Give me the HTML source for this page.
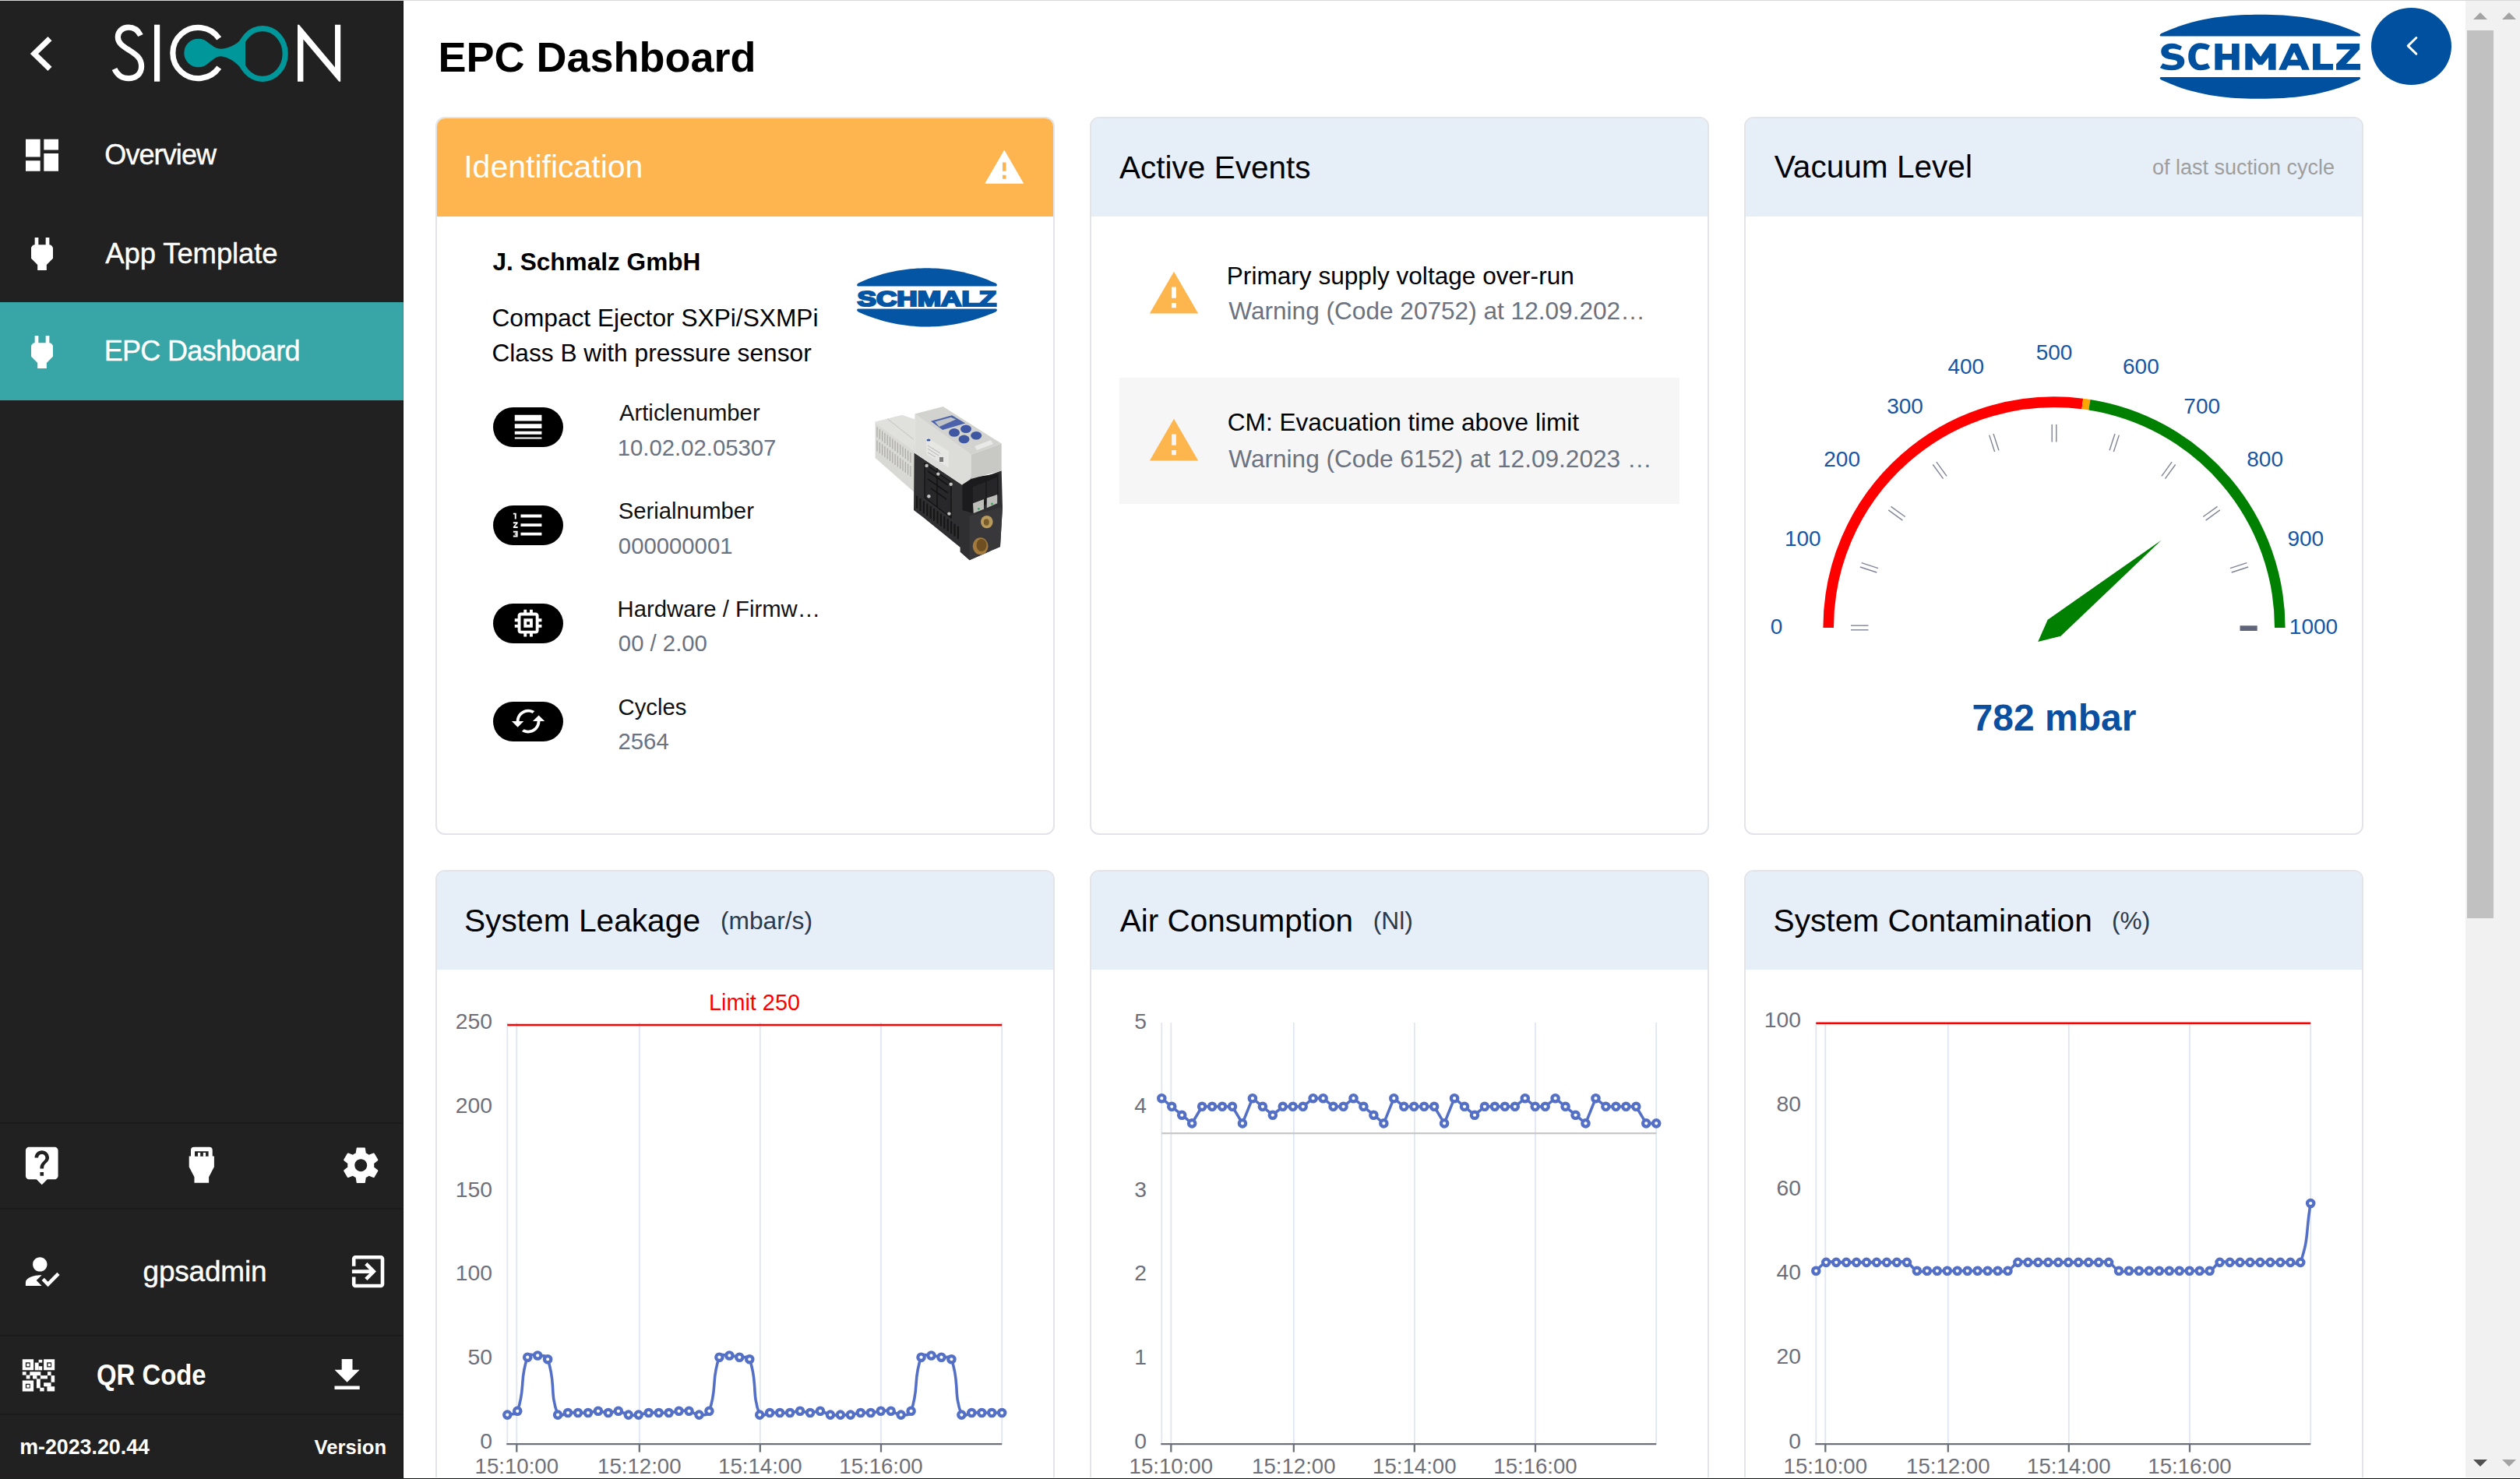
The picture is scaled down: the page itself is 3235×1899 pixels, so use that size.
<!DOCTYPE html><html><head><meta charset="utf-8"><title>EPC Dashboard</title><style>
html,body{margin:0;padding:0;}
body{width:3235px;height:1899px;position:relative;overflow:hidden;background:#fff;font-family:"Liberation Sans", sans-serif;}
.t{position:absolute;white-space:nowrap;line-height:1;font-family:"Liberation Sans", sans-serif;}
.a{position:absolute;}
svg{position:absolute;overflow:visible;}
</style></head><body>
<div class="a" style="left:0;top:0;width:3235px;height:1px;background:#d8d8d8"></div>
<div class="a" style="left:0;top:1px;width:517px;height:1898px;background:#212121"></div>
<div class="a" style="left:517px;top:1px;width:1px;height:1897px;background:#121212"></div>
<svg style="left:0;top:0;width:100px;height:100px"><path d="M64 49.7 L44 69 L64 88.3" fill="none" stroke="#fff" stroke-width="7.2" stroke-linecap="butt" stroke-linejoin="miter"/></svg>
<svg style="left:0;top:0;width:518px;height:140px">
<path d="M180.5 45.5 C177 38.5 171.5 35.2 165 35.2 C157 35.2 151.3 40.5 151.3 47.5 C151.3 55.5 158 59.5 166 64.5 C175 70.2 181.6 75 181.6 85 C181.6 95.5 174 100.6 165 100.6 C157 100.6 150.5 96 147 88.5" fill="none" stroke="#fff" stroke-width="7.2"/>
<rect x="198" y="31.7" width="7.2" height="73" fill="#fff"/>
<path d="M281.2 49.4 A32.6 32.6 0 1 0 281.2 86.6" fill="none" stroke="#fff" stroke-width="7.2"/>
<circle cx="254.6" cy="68" r="18.3" fill="#00979b"/>
<path d="M262 52.5 C270 55 275 62.7 283 62.7 C292 62.7 305.2 57 309.2 50 L315 52 L315 86 L309.2 88 C305.2 81 292 72.2 283 72.2 C275 72.2 270 81.5 262 83.5 Z" fill="#00979b"/>
<ellipse cx="337" cy="69" rx="29.2" ry="32.3" fill="none" stroke="#00979b" stroke-width="7.2"/>
<path d="M382 31.7 L384 31.7 L430 86.5 L430 31.7 L437.2 31.7 L437.2 104.8 L435.2 104.8 L389.4 50.5 L389.4 104.8 L382 104.8 Z" fill="#fff"/>
</svg>
<svg style="left:26.00px;top:171.70px;width:56.00px;height:54.70px;" viewBox="0 0 24 24" preserveAspectRatio="none"><path d="M3 13h8V3H3v10zm0 8h8v-6H3v6zm10 0h8V11h-8v10zm0-18v6h8V3h-8z" fill="#fff"/></svg>
<!--dash-->
<div class="t" style="left:134.29px;top:181.00px;font-size:36px;color:#fff;font-weight:400;letter-spacing:-0.9px;-webkit-text-stroke:0.4px #fff">Overview</div>
<svg style="left:26.00px;top:297.80px;width:56.00px;height:56.00px;" viewBox="0 0 24 24" preserveAspectRatio="none"><path d="M16.01 7L16 3h-2v4h-4V3H8v4h-.01C7 6.99 6 7.99 6 8.99v5.49L9.5 18v3h5v-3l3.5-3.51v-5.5c0-1-1-2-1.99-1.99z" fill="#fff"/></svg>
<div class="t" style="left:135.23px;top:308.00px;font-size:36.5px;color:#fff;font-weight:400;letter-spacing:-0.1px;-webkit-text-stroke:0.4px #fff">App Template</div>
<div class="a" style="left:0;top:388px;width:517px;height:126px;background:#38a5a6"></div><div class="a" style="left:517px;top:388px;width:1px;height:126px;background:#2b8e8e"></div>
<svg style="left:26.00px;top:423.90px;width:56.00px;height:56.00px;" viewBox="0 0 24 24" preserveAspectRatio="none"><path d="M16.01 7L16 3h-2v4h-4V3H8v4h-.01C7 6.99 6 7.99 6 8.99v5.49L9.5 18v3h5v-3l3.5-3.51v-5.5c0-1-1-2-1.99-1.99z" fill="#fff"/></svg>
<div class="t" style="left:133.75px;top:433.00px;font-size:36px;color:#fff;font-weight:400;letter-spacing:-0.7px;-webkit-text-stroke:0.4px #fff">EPC Dashboard</div>
<div class="a" style="left:0;top:1441px;width:517px;height:1.5px;background:#1b1b1b"></div>
<div class="a" style="left:0;top:1551px;width:517px;height:1.5px;background:#1b1b1b"></div>
<div class="a" style="left:0;top:1714px;width:517px;height:1.5px;background:#1b1b1b"></div>
<div class="a" style="left:0;top:1815px;width:517px;height:1.5px;background:#1b1b1b"></div>
<svg style="left:26.30px;top:1468.20px;width:55.50px;height:55.50px;" viewBox="0 0 24 24" preserveAspectRatio="none"><path d="M19 2H5c-1.11 0-2 .9-2 2v14c0 1.1.89 2 2 2h4l3 3 3-3h4c1.1 0 2-.9 2-2V4c0-1.1-.9-2-2-2zm-6 16h-2v-2h2v2zm2.07-7.75l-.9.92C13.45 11.9 13 12.5 13 14h-2v-.5c0-1.1.45-2.1 1.17-2.83l1.24-1.26c.37-.36.59-.86.59-1.41 0-1.1-.9-2-2-2s-2 .9-2 2H8c0-2.21 1.79-4 4-4s4 1.79 4 4c0 .88-.36 1.68-.93 2.25z" fill="#fff"/></svg>
<svg style="left:220px;top:1455px;width:80px;height:80px" viewBox="0 0 1479 1479">
<path fill="#fff" fill-rule="evenodd" d="M540 330 L900 330 Q975 330 975 405 L975 545 L1015 545 L1015 800 L890 1040 L890 1180 L545 1180 L545 1040 L420 800 L420 545 L462 545 L462 405 Q462 330 540 330 Z M555 428 L555 548 L880 548 L880 428 Z"/>
<rect x="628" y="462" width="60" height="90" fill="#fff"/><rect x="755" y="462" width="60" height="90" fill="#fff"/>
</svg>
<svg style="left:436.15px;top:1468.65px;width:54.50px;height:54.50px;" viewBox="0 0 24 24" preserveAspectRatio="none"><path d="M19.43 12.98c.04-.32.07-.64.07-.98s-.03-.66-.07-.98l2.11-1.65c.19-.15.24-.42.12-.64l-2-3.46c-.12-.22-.39-.3-.61-.22l-2.49 1c-.52-.4-1.08-.73-1.69-.98l-.38-2.65C14.46 2.18 14.25 2 14 2h-4c-.25 0-.46.18-.49.42l-.38 2.65c-.61.25-1.17.59-1.69.98l-2.49-1c-.23-.09-.49 0-.61.22l-2 3.46c-.13.22-.07.49.12.64l2.11 1.65c-.04.32-.07.65-.07.98s.03.66.07.98l-2.11 1.65c-.19.15-.24.42-.12.64l2 3.46c.12.22.39.3.61.22l2.49-1c.52.4 1.08.73 1.69.98l.38 2.65c.03.24.24.42.49.42h4c.25 0 .46-.18.49-.42l.38-2.65c.61-.25 1.17-.59 1.69-.98l2.49 1c.23.09.49 0 .61-.22l2-3.46c.12-.22.07-.49-.12-.64l-2.11-1.65zM12 15.5c-1.93 0-3.5-1.57-3.5-3.5s1.57-3.5 3.5-3.5 3.5 1.57 3.5 3.5-1.57 3.5-3.5 3.5z" fill="#fff"/></svg>
<!--gear-->
<svg style="left:26.10px;top:1605.40px;width:55.20px;height:55.20px;" viewBox="0 0 24 24" preserveAspectRatio="none"><path d="M9 17l3-2.94c-.39-.04-.68-.06-1-.06-2.67 0-8 1.34-8 4v2h9l-3-3zm2-5c2.21 0 4-1.79 4-4s-1.79-4-4-4-4 1.79-4 4 1.79 4 4 4m4.47 8.5L12 17l1.4-1.41 2.07 2.08 5.13-5.17 1.4 1.41z" fill="#fff"/></svg>
<div class="t" style="left:183.55px;top:1614.00px;font-size:37px;color:#fff;font-weight:400;letter-spacing:-0.2px;-webkit-text-stroke:0.4px #fff">gpsadmin</div>
<svg style="left:444.80px;top:1605.30px;width:55.20px;height:55.20px;" viewBox="0 0 24 24" preserveAspectRatio="none"><path d="M10.09 15.59L11.5 17l5-5-5-5-1.41 1.41L12.67 11H3v2h9.67l-2.58 2.59zM19 3H5c-1.11 0-2 .9-2 2v4h2V5h14v14H5v-4H3v4c0 1.1.89 2 2 2h14c1.1 0 2-.9 2-2V5c0-1.1-.9-2-2-2z" fill="#fff"/></svg>
<svg style="left:15px;top:1725px;width:80px;height:80px" viewBox="0 0 1479 1479"><g fill="#fff">
<path fill-rule="evenodd" d="M255 375H520V635H255Z M330 450V565H440V450Z"/><rect x="355" y="475" width="65" height="65"/>
<path fill-rule="evenodd" d="M760 375H1020V635H760Z M835 450V565H945V450Z"/><rect x="860" y="475" width="65" height="65"/>
<path fill-rule="evenodd" d="M255 880H520V1135H255Z M330 955V1065H440V955Z"/><rect x="355" y="980" width="65" height="65"/>
<rect x="640" y="385" width="85" height="70"/><rect x="550" y="455" width="90" height="180"/><rect x="640" y="540" width="85" height="95"/>
<rect x="255" y="670" width="90" height="80"/><rect x="345" y="750" width="90" height="90"/><rect x="430" y="670" width="260" height="90"/>
<rect x="500" y="760" width="100" height="80"/><rect x="680" y="760" width="170" height="80"/><rect x="850" y="670" width="85" height="90"/>
<rect x="935" y="760" width="85" height="160"/><rect x="590" y="840" width="90" height="220"/><rect x="670" y="1050" width="100" height="85"/>
<rect x="760" y="930" width="175" height="90"/><rect x="840" y="1020" width="180" height="115"/>
</g></svg>
<div class="t" style="left:124.00px;top:1748.00px;font-size:36.5px;color:#fff;font-weight:700;transform:scaleX(0.90);transform-origin:0 0">QR Code</div>
<svg style="left:417.50px;top:1738.40px;width:55.20px;height:55.20px;" viewBox="0 0 24 24" preserveAspectRatio="none"><path d="M19 9h-4V3H9v6H5l7 7 7-7zM5 18v2h14v-2H5z" fill="#fff"/></svg>
<div class="t" style="left:25.13px;top:1845.00px;font-size:26.8px;color:#fff;font-weight:700;">m-2023.20.44</div>
<div class="t" style="left:403.62px;top:1846.00px;font-size:25.6px;color:#fff;font-weight:700;">Version</div>
<div class="t" style="left:562.39px;top:46.00px;font-size:54px;color:#000;font-weight:700;">EPC Dashboard</div>
<svg style="left:2765px;top:10px;width:275px;height:125px" viewBox="0 0 2520 1145"><g fill="#0050a0">
<path d="M80 335 L2420 335 Q2445 322 2410 300 C2000 110 1600 80 1250 80 C900 80 500 110 90 300 Q55 322 80 335 Z"/>
<path d="M80 815 L2420 815 Q2445 828 2410 850 C2000 1040 1600 1070 1250 1070 C900 1070 500 1040 90 850 Q55 828 80 815 Z"/>
<path d="M330 455 C290 432 250 420 210 420 C130 420 85 460 85 515 C85 585 150 600 225 612 C262 618 275 628 275 645 C275 665 250 675 210 675 C165 675 130 665 105 652 L72 705 C110 725 160 735 210 735 C300 735 360 695 360 635 C360 565 300 548 225 536 C190 530 172 522 172 505 C172 487 190 480 218 480 C250 480 285 490 310 500 Z"/>
<path d="M660 445 C625 425 585 415 545 415 C460 415 405 480 405 575 C405 670 460 735 548 735 C590 735 630 725 662 705 L630 650 C605 663 578 670 550 670 C515 670 490 640 490 575 C490 510 515 480 550 480 C578 480 605 487 630 500 Z"/>
<path d="M718 422 L805 422 L805 540 L917 540 L917 422 L1005 422 L1005 730 L917 730 L917 612 L805 612 L805 730 L718 730 Z"/>
<path d="M1075 422 L1145 422 L1255 575 L1362 422 L1435 422 L1435 730 L1348 730 L1348 585 L1278 670 L1230 670 L1160 585 L1160 730 L1075 730 Z"/>
<path fill-rule="evenodd" d="M1613 422 L1697 422 L1832 730 L1745 730 L1722 680 L1580 680 L1555 730 L1467 730 Z M1650 520 L1695 612 L1605 612 Z"/>
<path d="M1870 422 L1958 422 L1958 660 L2108 660 L2108 730 L1870 730 Z"/>
<path d="M2150 422 L2420 422 L2420 490 L2262 660 L2428 660 L2428 730 L2145 730 L2145 662 L2310 490 L2150 490 Z"/>
</g></svg>
<div class="a" style="left:3044px;top:9.8px;width:103px;height:99.3px;border-radius:50%;background:#0050a0"></div>
<svg style="left:3085px;top:44px;width:22px;height:30px"><path d="M16.8 4.5 L6.2 14.8 L16.8 25.1" fill="none" stroke="#fff" stroke-width="3" stroke-linecap="round" stroke-linejoin="round"/></svg>
<div class="a" style="left:3165px;top:1px;width:70px;height:1896px;background:#f1f1f1"></div>
<div class="a" style="left:3167px;top:39px;width:34px;height:1140px;background:#c1c1c1"></div>
<svg style="left:3165px;top:0;width:70px;height:1899px"><g fill="#a3a3a3"><path d="M10 24.9 L28 24.9 L19 15.9 Z"/><path d="M47 24.9 L65 24.9 L56 15.9 Z"/><path d="M47 1874 L65 1874 L56 1883 Z"/></g><path d="M10 1874 L28 1874 L19 1883 Z" fill="#505050"/></svg>
<div class="a" style="left:559px;top:150px;width:795px;height:922px;box-sizing:border-box;border:2px solid #e2e4e9;border-radius:12px;background:#fff;overflow:hidden"><div class="a" style="left:0;top:0;right:0;height:126px;background:#feb54f"></div></div>
<div class="a" style="left:1399px;top:150px;width:795px;height:922px;box-sizing:border-box;border:2px solid #e2e4e9;border-radius:12px;background:#fff;overflow:hidden"><div class="a" style="left:0;top:0;right:0;height:126px;background:#e6eef7"></div></div>
<div class="a" style="left:2239px;top:150px;width:795px;height:922px;box-sizing:border-box;border:2px solid #e2e4e9;border-radius:12px;background:#fff;overflow:hidden"><div class="a" style="left:0;top:0;right:0;height:126px;background:#e6eef7"></div></div>
<div class="a" style="left:559px;top:1117px;width:795px;height:900px;box-sizing:border-box;border:2px solid #e2e4e9;border-radius:12px;background:#fff;overflow:hidden"><div class="a" style="left:0;top:0;right:0;height:126px;background:#e6eef7"></div></div>
<div class="a" style="left:1399px;top:1117px;width:795px;height:900px;box-sizing:border-box;border:2px solid #e2e4e9;border-radius:12px;background:#fff;overflow:hidden"><div class="a" style="left:0;top:0;right:0;height:126px;background:#e6eef7"></div></div>
<div class="a" style="left:2239px;top:1117px;width:795px;height:900px;box-sizing:border-box;border:2px solid #e2e4e9;border-radius:12px;background:#fff;overflow:hidden"><div class="a" style="left:0;top:0;right:0;height:126px;background:#e6eef7"></div></div>
<div class="t" style="left:595.22px;top:194.00px;font-size:41px;color:#fff;font-weight:400;">Identification</div>
<svg style="left:1261.70px;top:187.50px;width:54.50px;height:54.50px;" viewBox="0 0 24 24" preserveAspectRatio="none"><path d="M1 21h22L12 2 1 21z M13 18.4h-2v-2.2h2z M13 14h-2v-5h2z" fill="#fff"/></svg>
<div class="t" style="left:632.52px;top:321.00px;font-size:31.6px;color:#000;font-weight:700;">J. Schmalz GmbH</div>
<div class="t" style="left:631.39px;top:393.00px;font-size:31.7px;color:#000;font-weight:400;">Compact Ejector SXPi/SXMPi</div>
<div class="t" style="left:631.39px;top:438.00px;font-size:31.7px;color:#000;font-weight:400;">Class B with pressure sensor</div>
<svg style="left:1090px;top:335px;width:200px;height:95px" viewBox="0 0 2520 1197"><g fill="#0455a4">
<path d="M140 410 L2380 410 Q2410 390 2370 360 C1900 150 1500 118 1260 118 C1020 118 600 150 150 360 Q110 390 140 410 Z"/>
<path d="M140 775 L2380 775 Q2410 795 2370 825 C1900 1030 1500 1065 1260 1065 C1020 1065 600 1030 150 825 Q110 795 140 775 Z"/>
</g><text x="1258" y="725" text-anchor="middle" font-family="Liberation Sans" font-weight="700" font-size="340" textLength="2250" lengthAdjust="spacingAndGlyphs" fill="#0455a4" stroke="#0455a4" stroke-width="28">SCHMALZ</text></svg>
<div class="a" style="left:633px;top:523px;width:90px;height:51px;border-radius:25.5px;background:#000"></div>
<svg style="left:654.75px;top:525.30px;width:46.20px;height:46.20px;" viewBox="0 0 24 24" preserveAspectRatio="none"><path d="M3 17h18v-2H3v2zm0 3h18v-1H3v1zm0-7h18v-3H3v3zm0-9v4h18V4H3z" fill="#fff"/></svg>
<div class="t" style="left:794.94px;top:515.00px;font-size:29.3px;color:#111;font-weight:400;">Articlenumber</div>
<div class="t" style="left:792.77px;top:560.00px;font-size:29.3px;color:#6b7280;font-weight:400;">10.02.02.05307</div>
<div class="a" style="left:633px;top:649px;width:90px;height:51px;border-radius:25.5px;background:#000"></div>
<svg style="left:654.75px;top:651.30px;width:46.20px;height:46.20px;" viewBox="0 0 24 24" preserveAspectRatio="none"><path d="M2 17h2v.5H3v1h1v.5H2v1h3v-4H2v1zm1-9h1V4H2v1h1v3zm-1 3h1.8L2 13.1v.9h3v-1H3.2L5 10.9V10H2v1zm5-6v2h14V5H7zm0 14h14v-2H7v2zm0-6h14v-2H7v2z" fill="#fff"/></svg>
<div class="t" style="left:793.67px;top:641.00px;font-size:29.3px;color:#111;font-weight:400;">Serialnumber</div>
<div class="t" style="left:793.86px;top:686.00px;font-size:29.3px;color:#6b7280;font-weight:400;">000000001</div>
<div class="a" style="left:633px;top:775px;width:90px;height:51px;border-radius:25.5px;background:#000"></div>
<svg style="left:654.75px;top:777.30px;width:46.20px;height:46.20px;" viewBox="0 0 24 24" preserveAspectRatio="none"><path d="M15 9H9v6h6V9zm-2 4h-2v-2h2v2zm8-2V9h-2V7c0-1.1-.9-2-2-2h-2V3h-2v2h-2V3H9v2H7c-1.1 0-2 .9-2 2v2H3v2h2v2H3v2h2v2c0 1.1.9 2 2 2h2v2h2v-2h2v2h2v-2h2c1.1 0 2-.9 2-2v-2h2v-2h-2v-2h2zm-4 6H7V7h10v10z" fill="#fff"/></svg>
<div class="t" style="left:792.60px;top:767.00px;font-size:29.3px;color:#111;font-weight:400;">Hardware / Firmw…</div>
<div class="t" style="left:793.86px;top:811.00px;font-size:29.3px;color:#6b7280;font-weight:400;">00 / 2.00</div>
<div class="a" style="left:633px;top:901px;width:90px;height:51px;border-radius:25.5px;background:#000"></div>
<svg style="left:654.75px;top:903.30px;width:46.20px;height:46.20px;" viewBox="0 0 24 24" preserveAspectRatio="none"><path d="M19 8l-4 4h3c0 3.31-2.69 6-6 6-1.01 0-1.97-.25-2.8-.7l-1.46 1.46C8.97 19.54 10.43 20 12 20c4.42 0 8-3.58 8-8h3l-4-4zM6 12c0-3.31 2.69-6 6-6 1.01 0 1.97.25 2.8.7l1.46-1.46C15.03 4.46 13.57 4 12 4c-4.42 0-8 3.58-8 8H1l4 4 4-4H6z" fill="#fff"/></svg>
<div class="t" style="left:793.51px;top:893.00px;font-size:29.3px;color:#111;font-weight:400;">Cycles</div>
<div class="t" style="left:793.53px;top:937.00px;font-size:29.3px;color:#6b7280;font-weight:400;">2564</div>
<svg style="left:1115px;top:515px;width:180px;height:210px" viewBox="0 0 180 210">
<path d="M8.6 26.8 L42.9 17.9 L59.3 23.6 L59.3 116.5 L58 116.4 L8.6 73 Z" fill="#d8d8d5"/>
<path d="M8.6 26.8 L42.9 17.9 L59.3 23.6 L59.3 50 L57.9 64 L8.6 28.4 Z" fill="#e0e0dd"/>
<path d="M24.3 22.9 L57.9 49.3" stroke="#b9b9b5" stroke-width="0.8"/>
<g stroke="#a8a6a1" stroke-width="1.1"><line x1="11.0" y1="33.4" x2="11.0" y2="46.4"/><line x1="11.0" y1="50.4" x2="11.0" y2="64.4"/><line x1="14.3" y1="35.9" x2="14.3" y2="48.9"/><line x1="14.3" y1="52.9" x2="14.3" y2="66.9"/><line x1="17.6" y1="38.4" x2="17.6" y2="51.4"/><line x1="17.6" y1="55.4" x2="17.6" y2="69.4"/><line x1="20.9" y1="40.9" x2="20.9" y2="53.9"/><line x1="20.9" y1="57.9" x2="20.9" y2="71.9"/><line x1="24.2" y1="43.4" x2="24.2" y2="56.4"/><line x1="24.2" y1="60.4" x2="24.2" y2="74.4"/><line x1="27.5" y1="45.9" x2="27.5" y2="58.9"/><line x1="27.5" y1="62.9" x2="27.5" y2="76.9"/><line x1="30.8" y1="48.4" x2="30.8" y2="61.4"/><line x1="30.8" y1="65.4" x2="30.8" y2="79.4"/><line x1="34.1" y1="50.9" x2="34.1" y2="63.9"/><line x1="34.1" y1="67.9" x2="34.1" y2="81.9"/><line x1="37.4" y1="53.4" x2="37.4" y2="66.4"/><line x1="37.4" y1="70.4" x2="37.4" y2="84.4"/><line x1="40.7" y1="56.0" x2="40.7" y2="69.0"/><line x1="40.7" y1="73.0" x2="40.7" y2="87.0"/><line x1="44.0" y1="58.5" x2="44.0" y2="71.5"/><line x1="44.0" y1="75.5" x2="44.0" y2="89.5"/><line x1="47.3" y1="61.0" x2="47.3" y2="74.0"/><line x1="47.3" y1="78.0" x2="47.3" y2="92.0"/><line x1="50.6" y1="63.5" x2="50.6" y2="76.5"/><line x1="50.6" y1="80.5" x2="50.6" y2="94.5"/><line x1="53.9" y1="66.0" x2="53.9" y2="79.0"/><line x1="53.9" y1="83.0" x2="53.9" y2="97.0"/></g>
<path d="M58.6 66.4 L120 107.5 L170.7 89.3 L172 137 L169 187 L129.5 204.2 L117.6 193.8 L117.6 187.8 L69.2 148.4 L58 140 Z" fill="#2f2f31"/>
<path d="M129.5 147.6 L171.9 135.7 L168.9 187 L129.5 204.2 Z" fill="#38383a"/>
<g fill="#161617"><rect x="61.0" y="121.7" width="2.2" height="16"/><rect x="65.4" y="125.0" width="2.2" height="16"/><rect x="69.8" y="128.3" width="2.2" height="16"/><rect x="74.2" y="131.5" width="2.2" height="16"/><rect x="78.6" y="134.8" width="2.2" height="16"/><rect x="83.0" y="138.0" width="2.2" height="16"/><rect x="87.4" y="141.3" width="2.2" height="16"/><rect x="91.8" y="144.5" width="2.2" height="16"/><rect x="96.2" y="147.8" width="2.2" height="16"/><rect x="100.6" y="151.0" width="2.2" height="16"/><rect x="105.0" y="154.3" width="2.2" height="16"/><rect x="109.4" y="157.6" width="2.2" height="16"/><rect x="113.8" y="160.8" width="2.2" height="16"/></g>
<path d="M72 80 L106 104 L106 150 L72 124 Z" fill="#28282a" stroke="#121212" stroke-width="1.2"/>
<path d="M76 90 L102 108 M76 100 L102 118 M88 86 L88 136 M80 112 L100 126" stroke="#141414" stroke-width="1.6"/>
<g fill="#c4c5c2"><circle cx="74.6" cy="82.9" r="2.2"/><circle cx="89.3" cy="93.6" r="2.2"/><circle cx="105.7" cy="106.7" r="2.2"/><circle cx="77.4" cy="122.3" r="2.2"/><circle cx="103.4" cy="144.6" r="2.2"/></g>
<path d="M120.5 100 L166.7 93 L166.7 120.8 L134 143.9 L120.5 140 Z" fill="#1b1b1d"/>
<path d="M134 110 L150 104 L150 128 L134 134 Z M152 103 L165 98 L165 121 L152 126 Z" fill="#262628"/>
<path d="M134 131.2 L148 126 L148 138.7 L134.7 143.9 Z" fill="#bdbdb9"/><path d="M151.8 124.6 L165.2 120.1 L165.2 131.2 L151.8 137.2 Z" fill="#bdbdb9"/>
<circle cx="141.4" cy="138.3" r="1.4" fill="#3aa35a"/><circle cx="158.5" cy="132" r="1.4" fill="#3aa35a"/>
<path d="M59.3 16.4 L131.4 68.6 L131.4 100 L120 107.5 L59.3 66.4 Z" fill="#dcdcd9"/>
<path d="M131.4 68.6 L170.7 54.6 L170.7 89.3 L131.4 100 Z" fill="#c8c8c4"/>
<path d="M59.3 16.4 L95.7 7.1 L170.7 54.6 L131.4 68.6 Z" fill="#d2d2ce"/>
<path d="M80 25.7 L107.1 18.2 L124.3 28.6 L95 37.1 Z" fill="#4c62aa"/>
<path d="M85 26.4 L105.7 20.7 L112.1 23.6 L90.7 32.9 Z" fill="#bfc3c4"/>
<g fill="#3f56a3"><ellipse cx="110" cy="40.4" rx="7" ry="5.3"/><ellipse cx="125" cy="35.7" rx="7" ry="5.3"/><ellipse cx="122.5" cy="48.9" rx="7" ry="5.3"/><ellipse cx="138.2" cy="44.3" rx="7" ry="5.3"/></g>
<path d="M136 58 L157 50 L160 55 L139 63 Z" fill="#e9e9e7"/>
<path d="M74.3 46.4 L102.9 64.3 L102.9 85.7 L74.3 68.6 Z" fill="#e6e6e3"/>
<g stroke="#a0a0a0" stroke-width="0.7"><path d="M76 57 L92 67 M76 61 L90 70 M76 66 L86 72"/></g>
<rect x="91" y="72" width="5" height="6" fill="#7a7a7a"/>
<g fill="#3f56a3"><ellipse cx="77" cy="50" rx="2.5" ry="1.6"/></g>
<ellipse cx="151.8" cy="155.1" rx="7.8" ry="8.2" fill="#b89a5c"/><ellipse cx="151.3" cy="155.5" rx="3.5" ry="4.2" fill="#7a5c2a"/>
<ellipse cx="143.6" cy="186.3" rx="9.9" ry="11" fill="#a47b3c"/><ellipse cx="145" cy="185" rx="6.5" ry="8" fill="#6d4f22"/>
</svg>
<div class="t" style="left:1437.12px;top:195.00px;font-size:40.5px;color:#000;font-weight:400;">Active Events</div>
<div class="a" style="left:1437px;top:485px;width:719px;height:162px;background:#f6f6f6"></div>
<svg style="left:1472.70px;top:343.10px;width:68.00px;height:68.00px;" viewBox="0 0 24 24" preserveAspectRatio="none"><path d="M1 21h22L12 2 1 21z M13 18.4h-2v-2.2h2z M13 14h-2v-5h2z" fill="#fdb54e"/></svg>
<svg style="left:1472.70px;top:532.00px;width:68.00px;height:68.00px;" viewBox="0 0 24 24" preserveAspectRatio="none"><path d="M1 21h22L12 2 1 21z M13 18.4h-2v-2.2h2z M13 14h-2v-5h2z" fill="#fdb54e"/></svg>
<div class="t" style="left:1574.81px;top:339.00px;font-size:31.6px;color:#000;font-weight:400;">Primary supply voltage over-run</div>
<div class="t" style="left:1577.26px;top:384.00px;font-size:31.6px;color:#6b7280;font-weight:400;">Warning (Code 20752) at 12.09.202…</div>
<div class="t" style="left:1575.80px;top:527.00px;font-size:31.6px;color:#000;font-weight:400;">CM: Evacuation time above limit</div>
<div class="t" style="left:1577.26px;top:574.00px;font-size:31.6px;color:#6b7280;font-weight:400;">Warning (Code 6152) at 12.09.2023 …</div>
<div class="t" style="left:2277.82px;top:194.00px;font-size:40.6px;color:#000;font-weight:400;">Vacuum Level</div>
<div class="t" style="right:238.00px;top:202.00px;font-size:27px;color:#9e9e9e;font-weight:400;">of last suction cycle</div>
<svg style="left:0;top:0;width:3235px;height:1899px"><path d="M2347.20 806.00 A289.8 289.8 0 0 1 2673.32 518.49" fill="none" stroke="#ff0000" stroke-width="13.6"/><path d="M2673.32 518.49 A289.8 289.8 0 0 1 2682.33 519.77" fill="none" stroke="#ffa500" stroke-width="13.6"/><path d="M2682.33 519.77 A289.8 289.8 0 0 1 2926.80 806.00" fill="none" stroke="#008000" stroke-width="13.6"/><line x1="2398.50" y1="808.80" x2="2376.00" y2="808.80" stroke="#7f8496" stroke-width="1.4"/><line x1="2398.50" y1="803.20" x2="2376.00" y2="803.20" stroke="#7f8496" stroke-width="1.4"/><line x1="2409.31" y1="734.96" x2="2387.91" y2="728.01" stroke="#7f8496" stroke-width="1.4"/><line x1="2411.04" y1="729.64" x2="2389.64" y2="722.68" stroke="#7f8496" stroke-width="1.4"/><line x1="2442.40" y1="668.08" x2="2424.20" y2="654.85" stroke="#7f8496" stroke-width="1.4"/><line x1="2445.70" y1="663.55" x2="2427.49" y2="650.32" stroke="#7f8496" stroke-width="1.4"/><line x1="2494.55" y1="614.70" x2="2481.32" y2="596.49" stroke="#7f8496" stroke-width="1.4"/><line x1="2499.08" y1="611.40" x2="2485.85" y2="593.20" stroke="#7f8496" stroke-width="1.4"/><line x1="2560.64" y1="580.04" x2="2553.68" y2="558.64" stroke="#7f8496" stroke-width="1.4"/><line x1="2565.96" y1="578.31" x2="2559.01" y2="556.91" stroke="#7f8496" stroke-width="1.4"/><line x1="2634.20" y1="567.50" x2="2634.20" y2="545.00" stroke="#7f8496" stroke-width="1.4"/><line x1="2639.80" y1="567.50" x2="2639.80" y2="545.00" stroke="#7f8496" stroke-width="1.4"/><line x1="2708.04" y1="578.31" x2="2714.99" y2="556.91" stroke="#7f8496" stroke-width="1.4"/><line x1="2713.36" y1="580.04" x2="2720.32" y2="558.64" stroke="#7f8496" stroke-width="1.4"/><line x1="2774.92" y1="611.40" x2="2788.15" y2="593.20" stroke="#7f8496" stroke-width="1.4"/><line x1="2779.45" y1="614.70" x2="2792.68" y2="596.49" stroke="#7f8496" stroke-width="1.4"/><line x1="2828.30" y1="663.55" x2="2846.51" y2="650.32" stroke="#7f8496" stroke-width="1.4"/><line x1="2831.60" y1="668.08" x2="2849.80" y2="654.85" stroke="#7f8496" stroke-width="1.4"/><line x1="2862.96" y1="729.64" x2="2884.36" y2="722.68" stroke="#7f8496" stroke-width="1.4"/><line x1="2864.69" y1="734.96" x2="2886.09" y2="728.01" stroke="#7f8496" stroke-width="1.4"/><rect x="2875.5" y="803.3" width="22.2" height="6.7" fill="#606478"/><path d="M2774.7 693.5 L2628.7 795.7 L2616.2 823.9 L2645.4 816.8 Z" fill="#008000"/></svg>
<div class="t" style="left:1780.50px;width:1000px;text-align:center;top:791.00px;font-size:28px;color:#1656a3;font-weight:400;">0</div>
<div class="t" style="left:1814.30px;width:1000px;text-align:center;top:678.00px;font-size:28px;color:#1656a3;font-weight:400;">100</div>
<div class="t" style="left:1864.60px;width:1000px;text-align:center;top:576.00px;font-size:28px;color:#1656a3;font-weight:400;">200</div>
<div class="t" style="left:1945.50px;width:1000px;text-align:center;top:508.00px;font-size:28px;color:#1656a3;font-weight:400;">300</div>
<div class="t" style="left:2023.80px;width:1000px;text-align:center;top:457.00px;font-size:28px;color:#1656a3;font-weight:400;">400</div>
<div class="t" style="left:2137.00px;width:1000px;text-align:center;top:439.00px;font-size:28px;color:#1656a3;font-weight:400;">500</div>
<div class="t" style="left:2248.40px;width:1000px;text-align:center;top:457.00px;font-size:28px;color:#1656a3;font-weight:400;">600</div>
<div class="t" style="left:2326.70px;width:1000px;text-align:center;top:508.00px;font-size:28px;color:#1656a3;font-weight:400;">700</div>
<div class="t" style="left:2407.60px;width:1000px;text-align:center;top:576.00px;font-size:28px;color:#1656a3;font-weight:400;">800</div>
<div class="t" style="left:2459.80px;width:1000px;text-align:center;top:678.00px;font-size:28px;color:#1656a3;font-weight:400;">900</div>
<div class="t" style="left:2470.00px;width:1000px;text-align:center;top:791.00px;font-size:28px;color:#1656a3;font-weight:400;">1000</div>
<div class="t" style="left:2137.00px;width:1000px;text-align:center;top:898.00px;font-size:48px;color:#0b50a0;font-weight:700;">782 mbar</div>
<div class="t" style="left:595.95px;top:1162.00px;font-size:40.7px;color:#000;font-weight:400;">System Leakage</div>
<div class="t" style="left:925.03px;top:1167.00px;font-size:31.7px;color:#2d3a4b;font-weight:400;">(mbar/s)</div>
<div class="t" style="left:1437.72px;top:1162.00px;font-size:40.5px;color:#000;font-weight:400;">Air Consumption</div>
<div class="t" style="left:1762.73px;top:1167.00px;font-size:31.7px;color:#2d3a4b;font-weight:400;">(Nl)</div>
<div class="t" style="left:2276.55px;top:1162.00px;font-size:40.7px;color:#000;font-weight:400;">System Contamination</div>
<div class="t" style="left:2711.03px;top:1167.00px;font-size:31.7px;color:#2d3a4b;font-weight:400;">(%)</div>
<svg style="left:0;top:0;width:3235px;height:1899px"><line x1="651.30" y1="1313" x2="651.30" y2="1854.2" stroke="#e0e6f1" stroke-width="1.8"/><line x1="663.30" y1="1313" x2="663.30" y2="1854.2" stroke="#e0e6f1" stroke-width="1.8"/><line x1="820.80" y1="1313" x2="820.80" y2="1854.2" stroke="#e0e6f1" stroke-width="1.8"/><line x1="975.80" y1="1313" x2="975.80" y2="1854.2" stroke="#e0e6f1" stroke-width="1.8"/><line x1="1131.00" y1="1313" x2="1131.00" y2="1854.2" stroke="#e0e6f1" stroke-width="1.8"/><line x1="1286.20" y1="1313" x2="1286.20" y2="1854.2" stroke="#e0e6f1" stroke-width="1.8"/><line x1="651.30" y1="1316" x2="1286.20" y2="1316" stroke="#ff0000" stroke-width="2.6"/><line x1="650.30" y1="1854.2" x2="1286.20" y2="1854.2" stroke="#6e7079" stroke-width="2.3"/><line x1="663.30" y1="1854.2" x2="663.30" y2="1864.5" stroke="#6e7079" stroke-width="2.3"/><line x1="820.80" y1="1854.2" x2="820.80" y2="1864.5" stroke="#6e7079" stroke-width="2.3"/><line x1="975.80" y1="1854.2" x2="975.80" y2="1864.5" stroke="#6e7079" stroke-width="2.3"/><line x1="1131.00" y1="1854.2" x2="1131.00" y2="1864.5" stroke="#6e7079" stroke-width="2.3"/><path d="M651.30 1816.62 C657.78 1814.21 662.13 1817.87 664.26 1811.80 C675.09 1780.91 666.30 1772.75 677.21 1742.69 C679.26 1737.07 683.85 1739.81 690.17 1740.44 C696.81 1741.10 701.05 1739.16 703.13 1745.26 C714.01 1777.25 705.12 1787.52 716.09 1816.62 C718.08 1821.92 722.50 1814.70 729.04 1814.05 C735.46 1813.41 735.52 1814.05 742.00 1814.05 C748.48 1814.05 748.53 1814.61 754.96 1814.05 C761.48 1813.48 761.44 1811.80 767.91 1811.80 C774.39 1811.80 774.39 1814.05 780.87 1814.05 C787.35 1814.05 787.51 1811.17 793.83 1811.80 C800.47 1812.46 800.10 1815.37 806.79 1816.62 C813.05 1817.78 813.33 1817.26 819.74 1816.62 C826.28 1815.97 826.16 1814.70 832.70 1814.05 C839.12 1813.41 839.18 1814.05 845.66 1814.05 C852.14 1814.05 852.18 1814.61 858.61 1814.05 C865.14 1813.48 865.04 1812.36 871.57 1811.80 C878.00 1811.24 878.26 1810.63 884.53 1811.80 C891.22 1813.04 891.01 1816.62 897.49 1816.62 C903.96 1816.62 908.31 1817.87 910.44 1811.80 C921.27 1780.91 912.48 1772.75 923.40 1742.69 C925.44 1737.07 929.88 1740.44 936.36 1740.44 C942.84 1740.44 942.85 1741.48 949.31 1742.69 C955.81 1743.90 960.28 1739.56 962.27 1745.26 C973.23 1776.53 964.27 1787.52 975.23 1816.62 C977.22 1821.92 981.64 1814.70 988.19 1814.05 C994.60 1813.41 994.66 1814.05 1001.14 1814.05 C1007.62 1814.05 1007.67 1814.61 1014.10 1814.05 C1020.63 1813.48 1020.58 1811.80 1027.06 1811.80 C1033.54 1811.80 1033.54 1814.05 1040.01 1814.05 C1046.49 1814.05 1046.65 1811.17 1052.97 1811.80 C1059.61 1812.46 1059.24 1815.37 1065.93 1816.62 C1072.20 1817.78 1072.41 1816.62 1078.89 1816.62 C1085.36 1816.62 1085.43 1817.26 1091.84 1816.62 C1098.38 1815.97 1098.26 1814.70 1104.80 1814.05 C1111.22 1813.41 1111.33 1814.61 1117.76 1814.05 C1124.28 1813.48 1124.19 1812.36 1130.71 1811.80 C1137.14 1811.24 1137.40 1810.63 1143.67 1811.80 C1150.36 1813.04 1150.15 1816.62 1156.63 1816.62 C1163.11 1816.62 1167.46 1817.87 1169.59 1811.80 C1180.41 1780.91 1171.63 1772.75 1182.54 1742.69 C1184.58 1737.07 1189.02 1740.44 1195.50 1740.44 C1201.98 1740.44 1201.99 1741.48 1208.46 1742.69 C1214.95 1743.90 1219.42 1739.56 1221.41 1745.26 C1232.38 1776.53 1223.41 1787.52 1234.37 1816.62 C1236.37 1821.92 1240.79 1814.70 1247.33 1814.05 C1253.74 1813.41 1253.81 1814.05 1260.29 1814.05 C1266.76 1814.05 1266.76 1814.05 1273.24 1814.05 C1279.72 1814.05 1279.72 1814.05 1286.20 1814.05" fill="none" stroke="#5470c6" stroke-width="3.6" stroke-linejoin="round"/><circle cx="651.30" cy="1816.62" r="4.2" fill="#fff" stroke="#5470c6" stroke-width="4.2"/><circle cx="664.26" cy="1811.80" r="4.2" fill="#fff" stroke="#5470c6" stroke-width="4.2"/><circle cx="677.21" cy="1742.69" r="4.2" fill="#fff" stroke="#5470c6" stroke-width="4.2"/><circle cx="690.17" cy="1740.44" r="4.2" fill="#fff" stroke="#5470c6" stroke-width="4.2"/><circle cx="703.13" cy="1745.26" r="4.2" fill="#fff" stroke="#5470c6" stroke-width="4.2"/><circle cx="716.09" cy="1816.62" r="4.2" fill="#fff" stroke="#5470c6" stroke-width="4.2"/><circle cx="729.04" cy="1814.05" r="4.2" fill="#fff" stroke="#5470c6" stroke-width="4.2"/><circle cx="742.00" cy="1814.05" r="4.2" fill="#fff" stroke="#5470c6" stroke-width="4.2"/><circle cx="754.96" cy="1814.05" r="4.2" fill="#fff" stroke="#5470c6" stroke-width="4.2"/><circle cx="767.91" cy="1811.80" r="4.2" fill="#fff" stroke="#5470c6" stroke-width="4.2"/><circle cx="780.87" cy="1814.05" r="4.2" fill="#fff" stroke="#5470c6" stroke-width="4.2"/><circle cx="793.83" cy="1811.80" r="4.2" fill="#fff" stroke="#5470c6" stroke-width="4.2"/><circle cx="806.79" cy="1816.62" r="4.2" fill="#fff" stroke="#5470c6" stroke-width="4.2"/><circle cx="819.74" cy="1816.62" r="4.2" fill="#fff" stroke="#5470c6" stroke-width="4.2"/><circle cx="832.70" cy="1814.05" r="4.2" fill="#fff" stroke="#5470c6" stroke-width="4.2"/><circle cx="845.66" cy="1814.05" r="4.2" fill="#fff" stroke="#5470c6" stroke-width="4.2"/><circle cx="858.61" cy="1814.05" r="4.2" fill="#fff" stroke="#5470c6" stroke-width="4.2"/><circle cx="871.57" cy="1811.80" r="4.2" fill="#fff" stroke="#5470c6" stroke-width="4.2"/><circle cx="884.53" cy="1811.80" r="4.2" fill="#fff" stroke="#5470c6" stroke-width="4.2"/><circle cx="897.49" cy="1816.62" r="4.2" fill="#fff" stroke="#5470c6" stroke-width="4.2"/><circle cx="910.44" cy="1811.80" r="4.2" fill="#fff" stroke="#5470c6" stroke-width="4.2"/><circle cx="923.40" cy="1742.69" r="4.2" fill="#fff" stroke="#5470c6" stroke-width="4.2"/><circle cx="936.36" cy="1740.44" r="4.2" fill="#fff" stroke="#5470c6" stroke-width="4.2"/><circle cx="949.31" cy="1742.69" r="4.2" fill="#fff" stroke="#5470c6" stroke-width="4.2"/><circle cx="962.27" cy="1745.26" r="4.2" fill="#fff" stroke="#5470c6" stroke-width="4.2"/><circle cx="975.23" cy="1816.62" r="4.2" fill="#fff" stroke="#5470c6" stroke-width="4.2"/><circle cx="988.19" cy="1814.05" r="4.2" fill="#fff" stroke="#5470c6" stroke-width="4.2"/><circle cx="1001.14" cy="1814.05" r="4.2" fill="#fff" stroke="#5470c6" stroke-width="4.2"/><circle cx="1014.10" cy="1814.05" r="4.2" fill="#fff" stroke="#5470c6" stroke-width="4.2"/><circle cx="1027.06" cy="1811.80" r="4.2" fill="#fff" stroke="#5470c6" stroke-width="4.2"/><circle cx="1040.01" cy="1814.05" r="4.2" fill="#fff" stroke="#5470c6" stroke-width="4.2"/><circle cx="1052.97" cy="1811.80" r="4.2" fill="#fff" stroke="#5470c6" stroke-width="4.2"/><circle cx="1065.93" cy="1816.62" r="4.2" fill="#fff" stroke="#5470c6" stroke-width="4.2"/><circle cx="1078.89" cy="1816.62" r="4.2" fill="#fff" stroke="#5470c6" stroke-width="4.2"/><circle cx="1091.84" cy="1816.62" r="4.2" fill="#fff" stroke="#5470c6" stroke-width="4.2"/><circle cx="1104.80" cy="1814.05" r="4.2" fill="#fff" stroke="#5470c6" stroke-width="4.2"/><circle cx="1117.76" cy="1814.05" r="4.2" fill="#fff" stroke="#5470c6" stroke-width="4.2"/><circle cx="1130.71" cy="1811.80" r="4.2" fill="#fff" stroke="#5470c6" stroke-width="4.2"/><circle cx="1143.67" cy="1811.80" r="4.2" fill="#fff" stroke="#5470c6" stroke-width="4.2"/><circle cx="1156.63" cy="1816.62" r="4.2" fill="#fff" stroke="#5470c6" stroke-width="4.2"/><circle cx="1169.59" cy="1811.80" r="4.2" fill="#fff" stroke="#5470c6" stroke-width="4.2"/><circle cx="1182.54" cy="1742.69" r="4.2" fill="#fff" stroke="#5470c6" stroke-width="4.2"/><circle cx="1195.50" cy="1740.44" r="4.2" fill="#fff" stroke="#5470c6" stroke-width="4.2"/><circle cx="1208.46" cy="1742.69" r="4.2" fill="#fff" stroke="#5470c6" stroke-width="4.2"/><circle cx="1221.41" cy="1745.26" r="4.2" fill="#fff" stroke="#5470c6" stroke-width="4.2"/><circle cx="1234.37" cy="1816.62" r="4.2" fill="#fff" stroke="#5470c6" stroke-width="4.2"/><circle cx="1247.33" cy="1814.05" r="4.2" fill="#fff" stroke="#5470c6" stroke-width="4.2"/><circle cx="1260.29" cy="1814.05" r="4.2" fill="#fff" stroke="#5470c6" stroke-width="4.2"/><circle cx="1273.24" cy="1814.05" r="4.2" fill="#fff" stroke="#5470c6" stroke-width="4.2"/><circle cx="1286.20" cy="1814.05" r="4.2" fill="#fff" stroke="#5470c6" stroke-width="4.2"/></svg>
<div class="t" style="right:2603.00px;top:1836.00px;font-size:28.3px;color:#6e7079;font-weight:400;">0</div>
<div class="t" style="right:2603.00px;top:1728.00px;font-size:28.3px;color:#6e7079;font-weight:400;">50</div>
<div class="t" style="right:2603.00px;top:1620.00px;font-size:28.3px;color:#6e7079;font-weight:400;">100</div>
<div class="t" style="right:2603.00px;top:1513.00px;font-size:28.3px;color:#6e7079;font-weight:400;">150</div>
<div class="t" style="right:2603.00px;top:1405.00px;font-size:28.3px;color:#6e7079;font-weight:400;">200</div>
<div class="t" style="right:2603.00px;top:1297.00px;font-size:28.3px;color:#6e7079;font-weight:400;">250</div>
<div class="t" style="left:163.30px;width:1000px;text-align:center;top:1869.00px;font-size:27.6px;color:#6e7079;font-weight:400;">15:10:00</div>
<div class="t" style="left:320.80px;width:1000px;text-align:center;top:1869.00px;font-size:27.6px;color:#6e7079;font-weight:400;">15:12:00</div>
<div class="t" style="left:475.80px;width:1000px;text-align:center;top:1869.00px;font-size:27.6px;color:#6e7079;font-weight:400;">15:14:00</div>
<div class="t" style="left:631.00px;width:1000px;text-align:center;top:1869.00px;font-size:27.6px;color:#6e7079;font-weight:400;">15:16:00</div>
<div class="t" style="left:468.50px;width:1000px;text-align:center;top:1273.00px;font-size:28.8px;color:#ff0000;font-weight:400;">Limit 250</div>
<svg style="left:0;top:0;width:3235px;height:1899px"><line x1="1491.30" y1="1313" x2="1491.30" y2="1854.2" stroke="#e0e6f1" stroke-width="1.8"/><line x1="1503.30" y1="1313" x2="1503.30" y2="1854.2" stroke="#e0e6f1" stroke-width="1.8"/><line x1="1660.80" y1="1313" x2="1660.80" y2="1854.2" stroke="#e0e6f1" stroke-width="1.8"/><line x1="1815.80" y1="1313" x2="1815.80" y2="1854.2" stroke="#e0e6f1" stroke-width="1.8"/><line x1="1971.00" y1="1313" x2="1971.00" y2="1854.2" stroke="#e0e6f1" stroke-width="1.8"/><line x1="2126.20" y1="1313" x2="2126.20" y2="1854.2" stroke="#e0e6f1" stroke-width="1.8"/><line x1="1491.30" y1="1455.2" x2="2126.20" y2="1455.2" stroke="#c8c8c8" stroke-width="2.2"/><line x1="1490.30" y1="1854.2" x2="2126.20" y2="1854.2" stroke="#6e7079" stroke-width="2.3"/><line x1="1503.30" y1="1854.2" x2="1503.30" y2="1864.5" stroke="#6e7079" stroke-width="2.3"/><line x1="1660.80" y1="1854.2" x2="1660.80" y2="1864.5" stroke="#6e7079" stroke-width="2.3"/><line x1="1815.80" y1="1854.2" x2="1815.80" y2="1864.5" stroke="#6e7079" stroke-width="2.3"/><line x1="1971.00" y1="1854.2" x2="1971.00" y2="1864.5" stroke="#6e7079" stroke-width="2.3"/><path d="M1491.30 1410.19 L1504.26 1420.80 L1517.21 1431.73 L1530.17 1442.33 L1543.13 1420.80 L1556.09 1420.80 L1569.04 1420.80 L1582.00 1420.80 L1594.96 1442.33 L1607.91 1410.19 L1620.87 1420.80 L1633.83 1431.73 L1646.79 1420.80 L1659.74 1420.80 L1672.70 1420.80 L1685.66 1410.19 L1698.61 1410.19 L1711.57 1420.80 L1724.53 1420.80 L1737.49 1410.19 L1750.44 1420.80 L1763.40 1431.73 L1776.36 1442.33 L1789.31 1410.19 L1802.27 1420.80 L1815.23 1420.80 L1828.19 1420.80 L1841.14 1420.80 L1854.10 1442.33 L1867.06 1410.19 L1880.01 1420.80 L1892.97 1431.73 L1905.93 1420.80 L1918.89 1420.80 L1931.84 1420.80 L1944.80 1420.80 L1957.76 1410.19 L1970.71 1420.80 L1983.67 1420.80 L1996.63 1410.19 L2009.59 1420.80 L2022.54 1431.73 L2035.50 1442.33 L2048.46 1410.19 L2061.41 1420.80 L2074.37 1420.80 L2087.33 1420.80 L2100.29 1420.80 L2113.24 1442.33 L2126.20 1442.33" fill="none" stroke="#5470c6" stroke-width="3.6" stroke-linejoin="round"/><circle cx="1491.30" cy="1410.19" r="4.2" fill="#fff" stroke="#5470c6" stroke-width="4.2"/><circle cx="1504.26" cy="1420.80" r="4.2" fill="#fff" stroke="#5470c6" stroke-width="4.2"/><circle cx="1517.21" cy="1431.73" r="4.2" fill="#fff" stroke="#5470c6" stroke-width="4.2"/><circle cx="1530.17" cy="1442.33" r="4.2" fill="#fff" stroke="#5470c6" stroke-width="4.2"/><circle cx="1543.13" cy="1420.80" r="4.2" fill="#fff" stroke="#5470c6" stroke-width="4.2"/><circle cx="1556.09" cy="1420.80" r="4.2" fill="#fff" stroke="#5470c6" stroke-width="4.2"/><circle cx="1569.04" cy="1420.80" r="4.2" fill="#fff" stroke="#5470c6" stroke-width="4.2"/><circle cx="1582.00" cy="1420.80" r="4.2" fill="#fff" stroke="#5470c6" stroke-width="4.2"/><circle cx="1594.96" cy="1442.33" r="4.2" fill="#fff" stroke="#5470c6" stroke-width="4.2"/><circle cx="1607.91" cy="1410.19" r="4.2" fill="#fff" stroke="#5470c6" stroke-width="4.2"/><circle cx="1620.87" cy="1420.80" r="4.2" fill="#fff" stroke="#5470c6" stroke-width="4.2"/><circle cx="1633.83" cy="1431.73" r="4.2" fill="#fff" stroke="#5470c6" stroke-width="4.2"/><circle cx="1646.79" cy="1420.80" r="4.2" fill="#fff" stroke="#5470c6" stroke-width="4.2"/><circle cx="1659.74" cy="1420.80" r="4.2" fill="#fff" stroke="#5470c6" stroke-width="4.2"/><circle cx="1672.70" cy="1420.80" r="4.2" fill="#fff" stroke="#5470c6" stroke-width="4.2"/><circle cx="1685.66" cy="1410.19" r="4.2" fill="#fff" stroke="#5470c6" stroke-width="4.2"/><circle cx="1698.61" cy="1410.19" r="4.2" fill="#fff" stroke="#5470c6" stroke-width="4.2"/><circle cx="1711.57" cy="1420.80" r="4.2" fill="#fff" stroke="#5470c6" stroke-width="4.2"/><circle cx="1724.53" cy="1420.80" r="4.2" fill="#fff" stroke="#5470c6" stroke-width="4.2"/><circle cx="1737.49" cy="1410.19" r="4.2" fill="#fff" stroke="#5470c6" stroke-width="4.2"/><circle cx="1750.44" cy="1420.80" r="4.2" fill="#fff" stroke="#5470c6" stroke-width="4.2"/><circle cx="1763.40" cy="1431.73" r="4.2" fill="#fff" stroke="#5470c6" stroke-width="4.2"/><circle cx="1776.36" cy="1442.33" r="4.2" fill="#fff" stroke="#5470c6" stroke-width="4.2"/><circle cx="1789.31" cy="1410.19" r="4.2" fill="#fff" stroke="#5470c6" stroke-width="4.2"/><circle cx="1802.27" cy="1420.80" r="4.2" fill="#fff" stroke="#5470c6" stroke-width="4.2"/><circle cx="1815.23" cy="1420.80" r="4.2" fill="#fff" stroke="#5470c6" stroke-width="4.2"/><circle cx="1828.19" cy="1420.80" r="4.2" fill="#fff" stroke="#5470c6" stroke-width="4.2"/><circle cx="1841.14" cy="1420.80" r="4.2" fill="#fff" stroke="#5470c6" stroke-width="4.2"/><circle cx="1854.10" cy="1442.33" r="4.2" fill="#fff" stroke="#5470c6" stroke-width="4.2"/><circle cx="1867.06" cy="1410.19" r="4.2" fill="#fff" stroke="#5470c6" stroke-width="4.2"/><circle cx="1880.01" cy="1420.80" r="4.2" fill="#fff" stroke="#5470c6" stroke-width="4.2"/><circle cx="1892.97" cy="1431.73" r="4.2" fill="#fff" stroke="#5470c6" stroke-width="4.2"/><circle cx="1905.93" cy="1420.80" r="4.2" fill="#fff" stroke="#5470c6" stroke-width="4.2"/><circle cx="1918.89" cy="1420.80" r="4.2" fill="#fff" stroke="#5470c6" stroke-width="4.2"/><circle cx="1931.84" cy="1420.80" r="4.2" fill="#fff" stroke="#5470c6" stroke-width="4.2"/><circle cx="1944.80" cy="1420.80" r="4.2" fill="#fff" stroke="#5470c6" stroke-width="4.2"/><circle cx="1957.76" cy="1410.19" r="4.2" fill="#fff" stroke="#5470c6" stroke-width="4.2"/><circle cx="1970.71" cy="1420.80" r="4.2" fill="#fff" stroke="#5470c6" stroke-width="4.2"/><circle cx="1983.67" cy="1420.80" r="4.2" fill="#fff" stroke="#5470c6" stroke-width="4.2"/><circle cx="1996.63" cy="1410.19" r="4.2" fill="#fff" stroke="#5470c6" stroke-width="4.2"/><circle cx="2009.59" cy="1420.80" r="4.2" fill="#fff" stroke="#5470c6" stroke-width="4.2"/><circle cx="2022.54" cy="1431.73" r="4.2" fill="#fff" stroke="#5470c6" stroke-width="4.2"/><circle cx="2035.50" cy="1442.33" r="4.2" fill="#fff" stroke="#5470c6" stroke-width="4.2"/><circle cx="2048.46" cy="1410.19" r="4.2" fill="#fff" stroke="#5470c6" stroke-width="4.2"/><circle cx="2061.41" cy="1420.80" r="4.2" fill="#fff" stroke="#5470c6" stroke-width="4.2"/><circle cx="2074.37" cy="1420.80" r="4.2" fill="#fff" stroke="#5470c6" stroke-width="4.2"/><circle cx="2087.33" cy="1420.80" r="4.2" fill="#fff" stroke="#5470c6" stroke-width="4.2"/><circle cx="2100.29" cy="1420.80" r="4.2" fill="#fff" stroke="#5470c6" stroke-width="4.2"/><circle cx="2113.24" cy="1442.33" r="4.2" fill="#fff" stroke="#5470c6" stroke-width="4.2"/><circle cx="2126.20" cy="1442.33" r="4.2" fill="#fff" stroke="#5470c6" stroke-width="4.2"/></svg>
<div class="t" style="right:1763.00px;top:1836.00px;font-size:28.3px;color:#6e7079;font-weight:400;">0</div>
<div class="t" style="right:1763.00px;top:1728.00px;font-size:28.3px;color:#6e7079;font-weight:400;">1</div>
<div class="t" style="right:1763.00px;top:1620.00px;font-size:28.3px;color:#6e7079;font-weight:400;">2</div>
<div class="t" style="right:1763.00px;top:1513.00px;font-size:28.3px;color:#6e7079;font-weight:400;">3</div>
<div class="t" style="right:1763.00px;top:1405.00px;font-size:28.3px;color:#6e7079;font-weight:400;">4</div>
<div class="t" style="right:1763.00px;top:1297.00px;font-size:28.3px;color:#6e7079;font-weight:400;">5</div>
<div class="t" style="left:1003.30px;width:1000px;text-align:center;top:1869.00px;font-size:27.6px;color:#6e7079;font-weight:400;">15:10:00</div>
<div class="t" style="left:1160.80px;width:1000px;text-align:center;top:1869.00px;font-size:27.6px;color:#6e7079;font-weight:400;">15:12:00</div>
<div class="t" style="left:1315.80px;width:1000px;text-align:center;top:1869.00px;font-size:27.6px;color:#6e7079;font-weight:400;">15:14:00</div>
<div class="t" style="left:1471.00px;width:1000px;text-align:center;top:1869.00px;font-size:27.6px;color:#6e7079;font-weight:400;">15:16:00</div>
<svg style="left:0;top:0;width:3235px;height:1899px"><line x1="2331.30" y1="1313" x2="2331.30" y2="1854.2" stroke="#e0e6f1" stroke-width="1.8"/><line x1="2343.30" y1="1313" x2="2343.30" y2="1854.2" stroke="#e0e6f1" stroke-width="1.8"/><line x1="2500.80" y1="1313" x2="2500.80" y2="1854.2" stroke="#e0e6f1" stroke-width="1.8"/><line x1="2655.80" y1="1313" x2="2655.80" y2="1854.2" stroke="#e0e6f1" stroke-width="1.8"/><line x1="2811.00" y1="1313" x2="2811.00" y2="1854.2" stroke="#e0e6f1" stroke-width="1.8"/><line x1="2966.20" y1="1313" x2="2966.20" y2="1854.2" stroke="#e0e6f1" stroke-width="1.8"/><line x1="2331.30" y1="1313.8" x2="2966.20" y2="1313.8" stroke="#ff0000" stroke-width="2.6"/><line x1="2330.30" y1="1854.2" x2="2966.20" y2="1854.2" stroke="#6e7079" stroke-width="2.3"/><line x1="2343.30" y1="1854.2" x2="2343.30" y2="1864.5" stroke="#6e7079" stroke-width="2.3"/><line x1="2500.80" y1="1854.2" x2="2500.80" y2="1864.5" stroke="#6e7079" stroke-width="2.3"/><line x1="2655.80" y1="1854.2" x2="2655.80" y2="1864.5" stroke="#6e7079" stroke-width="2.3"/><line x1="2811.00" y1="1854.2" x2="2811.00" y2="1864.5" stroke="#6e7079" stroke-width="2.3"/><path d="M2331.30 1631.79 C2337.78 1626.33 2336.91 1623.96 2344.26 1620.86 C2349.87 1618.49 2350.74 1620.86 2357.21 1620.86 C2363.69 1620.86 2363.69 1620.86 2370.17 1620.86 C2376.65 1620.86 2376.65 1620.86 2383.13 1620.86 C2389.61 1620.86 2389.61 1620.86 2396.09 1620.86 C2402.56 1620.86 2402.56 1620.86 2409.04 1620.86 C2415.52 1620.86 2415.52 1620.86 2422.00 1620.86 C2428.48 1620.86 2428.48 1620.86 2434.96 1620.86 C2441.44 1620.86 2442.30 1618.49 2447.91 1620.86 C2455.26 1623.96 2453.53 1628.69 2460.87 1631.79 C2466.48 1634.16 2467.35 1631.79 2473.83 1631.79 C2480.31 1631.79 2480.31 1631.79 2486.79 1631.79 C2493.26 1631.79 2493.26 1631.79 2499.74 1631.79 C2506.22 1631.79 2506.22 1631.79 2512.70 1631.79 C2519.18 1631.79 2519.18 1631.79 2525.66 1631.79 C2532.14 1631.79 2532.14 1631.79 2538.61 1631.79 C2545.09 1631.79 2545.09 1631.79 2551.57 1631.79 C2558.05 1631.79 2558.05 1631.79 2564.53 1631.79 C2571.01 1631.79 2571.87 1634.16 2577.49 1631.79 C2584.83 1628.69 2583.10 1623.96 2590.44 1620.86 C2596.06 1618.49 2596.92 1620.86 2603.40 1620.86 C2609.88 1620.86 2609.88 1620.86 2616.36 1620.86 C2622.84 1620.86 2622.84 1620.86 2629.31 1620.86 C2635.79 1620.86 2635.79 1620.86 2642.27 1620.86 C2648.75 1620.86 2648.75 1620.86 2655.23 1620.86 C2661.71 1620.86 2661.71 1620.86 2668.19 1620.86 C2674.66 1620.86 2674.66 1620.86 2681.14 1620.86 C2687.62 1620.86 2687.62 1620.86 2694.10 1620.86 C2700.58 1620.86 2701.44 1618.49 2707.06 1620.86 C2714.40 1623.96 2712.67 1628.69 2720.01 1631.79 C2725.63 1634.16 2726.49 1631.79 2732.97 1631.79 C2739.45 1631.79 2739.45 1631.79 2745.93 1631.79 C2752.41 1631.79 2752.41 1631.79 2758.89 1631.79 C2765.36 1631.79 2765.36 1631.79 2771.84 1631.79 C2778.32 1631.79 2778.32 1631.79 2784.80 1631.79 C2791.28 1631.79 2791.28 1631.79 2797.76 1631.79 C2804.24 1631.79 2804.24 1631.79 2810.71 1631.79 C2817.19 1631.79 2817.19 1631.79 2823.67 1631.79 C2830.15 1631.79 2831.02 1634.16 2836.63 1631.79 C2843.97 1628.69 2842.24 1623.96 2849.59 1620.86 C2855.20 1618.49 2856.06 1620.86 2862.54 1620.86 C2869.02 1620.86 2869.02 1620.86 2875.50 1620.86 C2881.98 1620.86 2881.98 1620.86 2888.46 1620.86 C2894.94 1620.86 2894.94 1620.86 2901.41 1620.86 C2907.89 1620.86 2907.89 1620.86 2914.37 1620.86 C2920.85 1620.86 2920.85 1620.86 2927.33 1620.86 C2933.81 1620.86 2933.81 1620.86 2940.29 1620.86 C2946.76 1620.86 2951.38 1626.33 2953.24 1620.86 C2964.33 1588.40 2959.72 1582.93 2966.20 1545.00" fill="none" stroke="#5470c6" stroke-width="3.6" stroke-linejoin="round"/><circle cx="2331.30" cy="1631.79" r="4.2" fill="#fff" stroke="#5470c6" stroke-width="4.2"/><circle cx="2344.26" cy="1620.86" r="4.2" fill="#fff" stroke="#5470c6" stroke-width="4.2"/><circle cx="2357.21" cy="1620.86" r="4.2" fill="#fff" stroke="#5470c6" stroke-width="4.2"/><circle cx="2370.17" cy="1620.86" r="4.2" fill="#fff" stroke="#5470c6" stroke-width="4.2"/><circle cx="2383.13" cy="1620.86" r="4.2" fill="#fff" stroke="#5470c6" stroke-width="4.2"/><circle cx="2396.09" cy="1620.86" r="4.2" fill="#fff" stroke="#5470c6" stroke-width="4.2"/><circle cx="2409.04" cy="1620.86" r="4.2" fill="#fff" stroke="#5470c6" stroke-width="4.2"/><circle cx="2422.00" cy="1620.86" r="4.2" fill="#fff" stroke="#5470c6" stroke-width="4.2"/><circle cx="2434.96" cy="1620.86" r="4.2" fill="#fff" stroke="#5470c6" stroke-width="4.2"/><circle cx="2447.91" cy="1620.86" r="4.2" fill="#fff" stroke="#5470c6" stroke-width="4.2"/><circle cx="2460.87" cy="1631.79" r="4.2" fill="#fff" stroke="#5470c6" stroke-width="4.2"/><circle cx="2473.83" cy="1631.79" r="4.2" fill="#fff" stroke="#5470c6" stroke-width="4.2"/><circle cx="2486.79" cy="1631.79" r="4.2" fill="#fff" stroke="#5470c6" stroke-width="4.2"/><circle cx="2499.74" cy="1631.79" r="4.2" fill="#fff" stroke="#5470c6" stroke-width="4.2"/><circle cx="2512.70" cy="1631.79" r="4.2" fill="#fff" stroke="#5470c6" stroke-width="4.2"/><circle cx="2525.66" cy="1631.79" r="4.2" fill="#fff" stroke="#5470c6" stroke-width="4.2"/><circle cx="2538.61" cy="1631.79" r="4.2" fill="#fff" stroke="#5470c6" stroke-width="4.2"/><circle cx="2551.57" cy="1631.79" r="4.2" fill="#fff" stroke="#5470c6" stroke-width="4.2"/><circle cx="2564.53" cy="1631.79" r="4.2" fill="#fff" stroke="#5470c6" stroke-width="4.2"/><circle cx="2577.49" cy="1631.79" r="4.2" fill="#fff" stroke="#5470c6" stroke-width="4.2"/><circle cx="2590.44" cy="1620.86" r="4.2" fill="#fff" stroke="#5470c6" stroke-width="4.2"/><circle cx="2603.40" cy="1620.86" r="4.2" fill="#fff" stroke="#5470c6" stroke-width="4.2"/><circle cx="2616.36" cy="1620.86" r="4.2" fill="#fff" stroke="#5470c6" stroke-width="4.2"/><circle cx="2629.31" cy="1620.86" r="4.2" fill="#fff" stroke="#5470c6" stroke-width="4.2"/><circle cx="2642.27" cy="1620.86" r="4.2" fill="#fff" stroke="#5470c6" stroke-width="4.2"/><circle cx="2655.23" cy="1620.86" r="4.2" fill="#fff" stroke="#5470c6" stroke-width="4.2"/><circle cx="2668.19" cy="1620.86" r="4.2" fill="#fff" stroke="#5470c6" stroke-width="4.2"/><circle cx="2681.14" cy="1620.86" r="4.2" fill="#fff" stroke="#5470c6" stroke-width="4.2"/><circle cx="2694.10" cy="1620.86" r="4.2" fill="#fff" stroke="#5470c6" stroke-width="4.2"/><circle cx="2707.06" cy="1620.86" r="4.2" fill="#fff" stroke="#5470c6" stroke-width="4.2"/><circle cx="2720.01" cy="1631.79" r="4.2" fill="#fff" stroke="#5470c6" stroke-width="4.2"/><circle cx="2732.97" cy="1631.79" r="4.2" fill="#fff" stroke="#5470c6" stroke-width="4.2"/><circle cx="2745.93" cy="1631.79" r="4.2" fill="#fff" stroke="#5470c6" stroke-width="4.2"/><circle cx="2758.89" cy="1631.79" r="4.2" fill="#fff" stroke="#5470c6" stroke-width="4.2"/><circle cx="2771.84" cy="1631.79" r="4.2" fill="#fff" stroke="#5470c6" stroke-width="4.2"/><circle cx="2784.80" cy="1631.79" r="4.2" fill="#fff" stroke="#5470c6" stroke-width="4.2"/><circle cx="2797.76" cy="1631.79" r="4.2" fill="#fff" stroke="#5470c6" stroke-width="4.2"/><circle cx="2810.71" cy="1631.79" r="4.2" fill="#fff" stroke="#5470c6" stroke-width="4.2"/><circle cx="2823.67" cy="1631.79" r="4.2" fill="#fff" stroke="#5470c6" stroke-width="4.2"/><circle cx="2836.63" cy="1631.79" r="4.2" fill="#fff" stroke="#5470c6" stroke-width="4.2"/><circle cx="2849.59" cy="1620.86" r="4.2" fill="#fff" stroke="#5470c6" stroke-width="4.2"/><circle cx="2862.54" cy="1620.86" r="4.2" fill="#fff" stroke="#5470c6" stroke-width="4.2"/><circle cx="2875.50" cy="1620.86" r="4.2" fill="#fff" stroke="#5470c6" stroke-width="4.2"/><circle cx="2888.46" cy="1620.86" r="4.2" fill="#fff" stroke="#5470c6" stroke-width="4.2"/><circle cx="2901.41" cy="1620.86" r="4.2" fill="#fff" stroke="#5470c6" stroke-width="4.2"/><circle cx="2914.37" cy="1620.86" r="4.2" fill="#fff" stroke="#5470c6" stroke-width="4.2"/><circle cx="2927.33" cy="1620.86" r="4.2" fill="#fff" stroke="#5470c6" stroke-width="4.2"/><circle cx="2940.29" cy="1620.86" r="4.2" fill="#fff" stroke="#5470c6" stroke-width="4.2"/><circle cx="2953.24" cy="1620.86" r="4.2" fill="#fff" stroke="#5470c6" stroke-width="4.2"/><circle cx="2966.20" cy="1545.00" r="4.2" fill="#fff" stroke="#5470c6" stroke-width="4.2"/></svg>
<div class="t" style="right:923.00px;top:1836.00px;font-size:28.3px;color:#6e7079;font-weight:400;">0</div>
<div class="t" style="right:923.00px;top:1727.00px;font-size:28.3px;color:#6e7079;font-weight:400;">20</div>
<div class="t" style="right:923.00px;top:1619.00px;font-size:28.3px;color:#6e7079;font-weight:400;">40</div>
<div class="t" style="right:923.00px;top:1511.00px;font-size:28.3px;color:#6e7079;font-weight:400;">60</div>
<div class="t" style="right:923.00px;top:1403.00px;font-size:28.3px;color:#6e7079;font-weight:400;">80</div>
<div class="t" style="right:923.00px;top:1295.00px;font-size:28.3px;color:#6e7079;font-weight:400;">100</div>
<div class="t" style="left:1843.30px;width:1000px;text-align:center;top:1869.00px;font-size:27.6px;color:#6e7079;font-weight:400;">15:10:00</div>
<div class="t" style="left:2000.80px;width:1000px;text-align:center;top:1869.00px;font-size:27.6px;color:#6e7079;font-weight:400;">15:12:00</div>
<div class="t" style="left:2155.80px;width:1000px;text-align:center;top:1869.00px;font-size:27.6px;color:#6e7079;font-weight:400;">15:14:00</div>
<div class="t" style="left:2311.00px;width:1000px;text-align:center;top:1869.00px;font-size:27.6px;color:#6e7079;font-weight:400;">15:16:00</div>
<div class="a" style="left:518px;top:1897px;width:2717px;height:1px;background:#fff"></div>
<div class="a" style="left:0;top:1898px;width:518px;height:1px;background:#1c2321"></div>
<div class="a" style="left:518px;top:1898px;width:2717px;height:1px;background:#0e1311"></div>
</body></html>
